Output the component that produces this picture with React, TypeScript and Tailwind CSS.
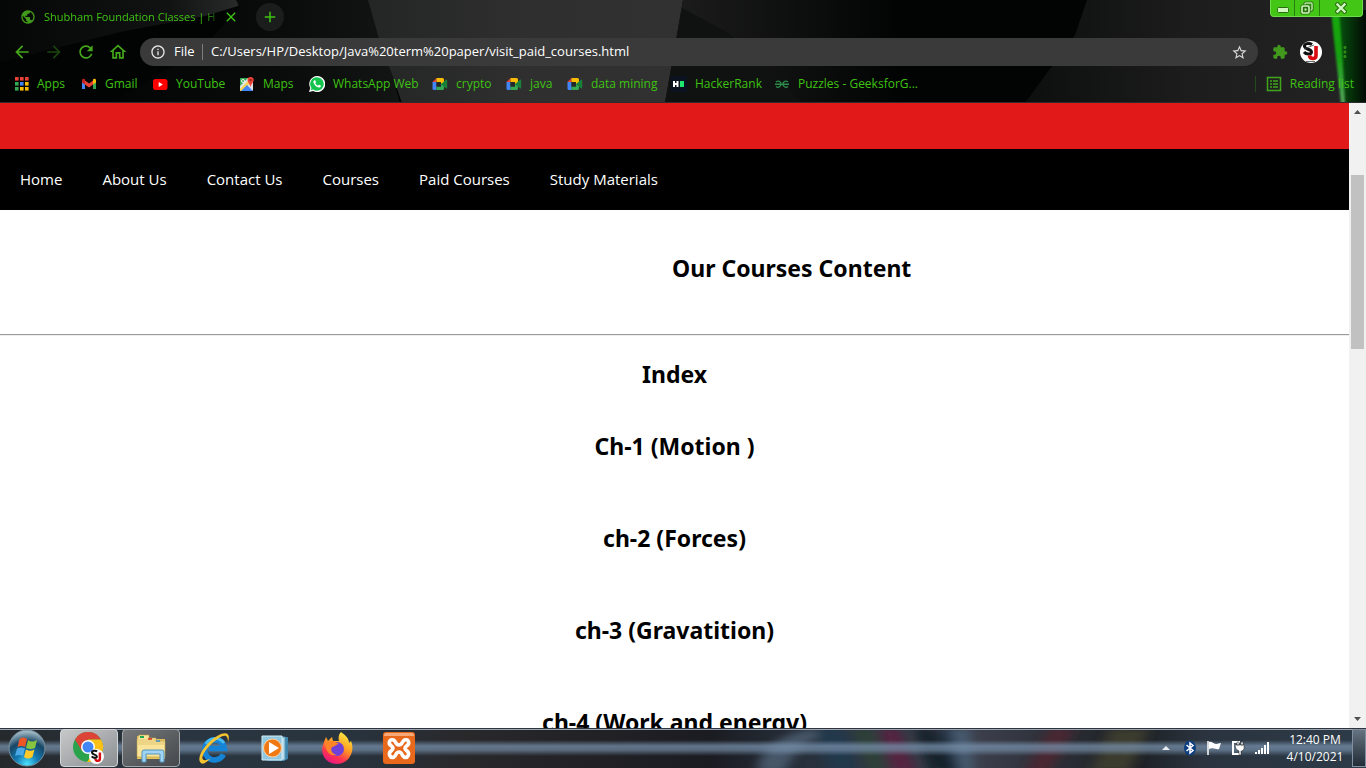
import React from "react";
import { MdArrowBack, MdArrowForward, MdRefresh, MdOutlineHome, MdInfoOutline, MdStarOutline, MdExtension, MdPublic, MdMoreVert, MdAdd, MdClose } from "react-icons/md";

const uiFont = "font-['Open_Sans','Noto_Sans',sans-serif]";

function Backdrop() {
  return (
    <svg className="absolute inset-0 -z-10 h-full w-full" viewBox="0 0 1366 103" preserveAspectRatio="none" aria-hidden="true">
      <defs>
        <linearGradient id="left" x1="0" x2="1"><stop offset="0" stopColor="#050707" /><stop offset="0.7" stopColor="#111212" /><stop offset="1" stopColor="#2a2b2b" /></linearGradient>
        <linearGradient id="dim" x1="0" x2="1"><stop offset="0" stopColor="#030404" /><stop offset="0.6" stopColor="#0a0c0b" /><stop offset="1" stopColor="#131515" /></linearGradient>
        <linearGradient id="mid" x1="0" x2="1"><stop offset="0" stopColor="#242525" /><stop offset="0.5" stopColor="#2f2f2f" /><stop offset="1" stopColor="#313131" /></linearGradient>
        <linearGradient id="fade" x1="0" x2="1"><stop offset="0" stopColor="#1d1d1d" /><stop offset="1" stopColor="#020303" /></linearGradient>
        <linearGradient id="right" x1="0" x2="1"><stop offset="0" stopColor="#0d0e0e" /><stop offset="0.5" stopColor="#1d1d1d" /><stop offset="1" stopColor="#232323" /></linearGradient>
        <linearGradient id="glow" x1="0" x2="1"><stop offset="0" stopColor="#0a6a10" /><stop offset="0.4" stopColor="#053d0b" /><stop offset="1" stopColor="#020a04" /></linearGradient>
        <linearGradient id="beam" x1="0" y1="0" x2="0" y2="1"><stop offset="0" stopColor="#16a80c" /><stop offset="0.5" stopColor="#17a012" /><stop offset="1" stopColor="#53a85a" /></linearGradient>
        <filter id="haze" x="-1" width="3"><feGaussianBlur stdDeviation="1 0" /></filter>
      </defs>
      <rect width="1366" height="103" fill="#020404" />
      <path d="M0 0H242L238 6 205 16 120 32 0 62Z" fill="url(#left)" />
      <path d="M236 0H370L400 103H110L200 50 240 8Z" fill="url(#dim)" />
      <path d="M368 0H683L665 103H402L378 35Z" fill="url(#mid)" />
      <path d="M683 0H900V103H665Z" fill="url(#fade)" />
      <path d="M682 8 730 34 802 103H665Z" fill="#101111" />
      <path d="M1087 0H1366V103H1025L1075 35Z" fill="url(#right)" />
      <path d="M1333 10H1366V103H1345Z" fill="url(#glow)" />
      <path d="M1331 10H1339L1342 50 1345 103H1341L1334 40Z" fill="url(#beam)" filter="url(#haze)" />
      <path d="M0 102.5H1366" stroke="#2c2c2c" />
    </svg>
  );
}

function SJ({ className }: { className?: string }) {
  return (
    <svg viewBox="0 0 22 22" className={className} aria-hidden="true">
      <circle cx="11" cy="11" r="11" fill="#fff" />
      <path d="M12 3.500C9 1.500 4 2.500 4.500 5.500S11.500 8 11.500 11 6 13.500 4 11" fill="none" stroke="#111" strokeWidth="3" />
      <path d="M16 5V14.500C16 18.500 10 18.500 9.500 14.500" fill="none" stroke="#d80c12" strokeWidth="3.600" />
      <path d="M4 8 14 4M6 20.500H15" stroke="#444" strokeWidth="0.800" />
    </svg>
  );
}

function AppsIcon() {
  const c = ["#ea4335", "#ea4335", "#ea4335", "#34a853", "#4285f4", "#fbbc04", "#34a853", "#fbbc04", "#fbbc04"];
  return (
    <svg viewBox="0 0 16 16" className="size-4" aria-hidden="true">
      {c.map((f, i) => <rect key={i} x={2 + (i % 3) * 5} y={1 + Math.floor(i / 3) * 5} width="3.600" height="3.600" fill={f} />)}
    </svg>
  );
}
function GmailIcon() {
  return (
    <svg viewBox="0 0 16 16" className="size-4" aria-hidden="true">
      <path d="M1 4V13H4V7Z" fill="#4285f4" /><path d="M15 4V13H12V7Z" fill="#34a853" />
      <path d="M4 4.500 8 7.500 12 4.500V8.500L8 11.500 4 8.500Z" fill="#ea4335" />
      <path d="M1 4.500C1 2.500 3 2.300 4 3.500V8.500L1 6.500Z" fill="#c5221f" /><path d="M15 4.500C15 2.500 13 2.300 12 3.500V8.500L15 6.500Z" fill="#fbbc04" />
    </svg>
  );
}
function YouTubeIcon() {
  return (
    <svg viewBox="0 0 16 16" className="size-4" aria-hidden="true">
      <rect x="1" y="3" width="14.500" height="11" rx="2.500" fill="#f00" /><path d="M6.700 6V11L10.800 8.500Z" fill="#fff" />
    </svg>
  );
}
function MapsIcon() {
  return (
    <svg viewBox="0 0 16 16" className="size-4" aria-hidden="true">
      <rect x="1" y="2" width="13" height="13" rx="1" fill="#dfe3e6" />
      <path d="M1 2H9L1 10Z" fill="#34a853" />
      <path d="M1 13 12 2 14 4 3 15H1Z" fill="#fbd34c" /><path d="M2 15 8 9 14 15Z" fill="#4285f4" />
      <circle cx="4" cy="5" r="1.500" fill="none" stroke="#fff" strokeWidth="0.900" />
      <path d="M11.500 11C11 8 8.500 6.500 8.500 4A3 3 0 0 1 14.700 4C14.700 6.500 12 8 11.500 11Z" fill="#ea4335" /><circle cx="11.600" cy="4" r="1.100" fill="#8b1a14" />
    </svg>
  );
}
function WhatsAppIcon() {
  return (
    <svg viewBox="0 0 16 16" className="size-4" aria-hidden="true">
      <path d="M8 0A8 8 0 0 0 1.300 12L0 16 4.200 14.900A8 8 0 1 0 8 0Z" fill="#fff" />
      <path d="M8 1.300A6.700 6.700 0 0 0 2.500 12L1.800 14.200 4.200 13.500A6.700 6.700 0 1 0 8 1.300Z" fill="#12c44e" />
      <path d="M5.300 4.200C4 5 4.200 6.500 5.500 8.500S9 11.800 10.500 11.500 12 9.700 11.800 9.500L10 8.700 9 9.800C7.800 9.200 6.900 8.400 6.300 7.200L7 6.200 6.200 4.200Z" fill="#fff" />
    </svg>
  );
}
function MeetIcon() {
  return (
    <svg viewBox="0 0 16 16" className="size-4" aria-hidden="true">
      <path d="M0.500 6 4.500 2V6Z" fill="#ea4335" /><path d="M4.500 2H10.500Q12 2 12 3.500V7L9 9V6H4.500Z" fill="#fbbc04" />
      <path d="M0.500 6H4.500V11H4.500V14H2Q0.500 14 0.500 12.500Z" fill="#4285f4" />
      <path d="M4.500 10.500H9V8L12 6V12.500Q12 14 10.500 14H4.500Z" fill="#34a853" />
      <rect x="4.500" y="6" width="4.500" height="4.500" fill="#262727" />
      <path d="M9 8.200 14 3.800Q15.200 3.200 15.200 4.500V11.800Q15.200 13 14 12.300Z" fill="#188038" />
    </svg>
  );
}
function HackerRankIcon() {
  return (
    <svg viewBox="0 0 16 16" className="size-4" aria-hidden="true">
      <rect width="16" height="16" fill="#0b1320" /><path d="M3 5V11M6.500 5V11M3 8H6.500" stroke="#fff" strokeWidth="2" /><rect x="9" y="5" width="4" height="6" fill="#1ee870" />
    </svg>
  );
}
function GeeksIcon() {
  return (
    <svg viewBox="0 0 16 16" className="size-4" aria-hidden="true">
      <path d="M2 6C4 4.500 7 5 7 8S4 12 2 10.500M14 6C12 4.500 9 5 9 8S12 12 14 10.500M1 8.300H15" fill="none" stroke="#2c8a4a" strokeWidth="1.400" />
    </svg>
  );
}

const bookmarks = [
  { label: "Apps", icon: <AppsIcon />, w: "w-[68px]" },
  { label: "Gmail", icon: <GmailIcon />, w: "w-[71px]" },
  { label: "YouTube", icon: <YouTubeIcon />, w: "w-[87px]" },
  { label: "Maps", icon: <MapsIcon />, w: "w-[70px]" },
  { label: "WhatsApp Web", icon: <WhatsAppIcon />, w: "w-[123px]" },
  { label: "crypto", icon: <MeetIcon />, w: "w-[74px]" },
  { label: "java", icon: <MeetIcon />, w: "w-[61px]" },
  { label: "data mining", icon: <MeetIcon />, w: "w-[104px]" },
  { label: "HackerRank", icon: <HackerRankIcon />, w: "w-[103px]" },
  { label: "Puzzles - GeeksforG...", icon: <GeeksIcon />, w: "w-[160px]" },
];

function Browser() {
  return (
    <header className={`relative isolate flex h-[103px] shrink-0 flex-col overflow-hidden text-xs text-[#3fc312] ${uiFont}`}>
      <Backdrop />
      <div className="flex h-[35px] items-start">
        <div className="flex h-[34px] w-60 items-center justify-between pr-px pl-5">
          <MdPublic className="size-4 shrink-0 text-[#419b1b]" />
          <span className="ml-2 flex-1 text-[11px] whitespace-nowrap [mask-image:linear-gradient(to_right,black_88%,transparent)]">Shubham Foundation Classes | H</span>
          <button aria-label="Close tab"><MdClose className="size-4" /></button>
        </div>
        <button aria-label="New tab" className="mt-[3px] ml-4 flex size-7 items-center justify-center rounded-full bg-[#1b1d1c]"><MdAdd className="size-[18px]" /></button>
        <div className="mr-[3px] ml-auto flex h-[17px] overflow-hidden rounded-b border border-t-0 border-[#70dc4c] bg-[#43c616] text-[#c9f5ba]">
          <button aria-label="Minimize" className="flex w-6 items-end justify-center border-r border-[#257f0a] pb-[3px]"><svg viewBox="0 0 12 6" className="h-1.5 w-3"><rect x="0.500" y="0.500" width="11" height="5" rx="1" fill="#d0f7bd" stroke="#286f12" /></svg></button>
          <button aria-label="Restore" className="flex w-[25px] items-center justify-center border-r border-[#257f0a]"><svg viewBox="0 0 14 14" className="size-3.5"><rect x="5" y="2" width="7" height="7" rx="1" fill="none" stroke="#286f12" strokeWidth="3.200" /><rect x="5" y="2" width="7" height="7" rx="1" fill="none" stroke="#b5e79e" strokeWidth="1.500" /><rect x="2" y="5" width="7" height="7" rx="1" fill="#43c616" stroke="#286f12" strokeWidth="3.200" /><rect x="2" y="5" width="7" height="7" rx="1" fill="#286f12" stroke="#d0f7bd" strokeWidth="1.600" /><rect x="4.500" y="7.500" width="2" height="2" fill="#d0f7bd" /></svg></button>
          <button aria-label="Close" className="flex w-[42px] items-center justify-center"><svg viewBox="0 0 12 12" className="size-3"><path d="M2.500 2.500 9.500 9.500M9.500 2.500 2.500 9.500" stroke="#286f12" strokeWidth="4.500" strokeLinecap="square" /><path d="M2.500 2.500 9.500 9.500M9.500 2.500 2.500 9.500" stroke="#d0f7bd" strokeWidth="2.400" strokeLinecap="square" /></svg></button>
        </div>
      </div>
      <div className="flex h-[34px] items-center pr-3 pl-3">
        <div className="flex w-32 shrink-0 gap-3 text-[#45a81b]">
          <button aria-label="Back"><MdArrowBack className="size-5" /></button>
          <button aria-label="Forward" className="text-[#1c4410]"><MdArrowForward className="size-5" /></button>
          <button aria-label="Reload"><MdRefresh className="size-5" /></button>
          <button aria-label="Home page"><MdOutlineHome className="size-5" /></button>
        </div>
        <div className="flex h-7 min-w-0 flex-1 items-center rounded-full bg-[#3a3a3a] px-2.5 text-[13px] text-white">
          <MdInfoOutline className="size-4 shrink-0 text-[#e5e5e5]" />
          <span className="ml-2 w-7">File</span>
          <span className="h-4 border-l border-[#7d7d7d]" />
          <input aria-label="Address" className="min-w-0 flex-1 bg-transparent pl-2 outline-none" defaultValue="C:/Users/HP/Desktop/Java%20term%20paper/visit_paid_courses.html" />
          <button aria-label="Bookmark this page"><MdStarOutline className="size-[17px] text-[#d8d8d8]" /></button>
        </div>
        <button aria-label="Extensions" className="ml-3.5 text-[#41981d]"><MdExtension className="size-4" /></button>
        <button aria-label="Profile" className="ml-3"><SJ className="size-[22px]" /></button>
        <button aria-label="Menu" className="ml-3.5 text-[#328b16]"><MdMoreVert className="size-[18px]" /></button>
      </div>
      <nav aria-label="Bookmarks" className="flex h-[30px] items-center pl-[13px]">
        {bookmarks.map((b) => (
          <a key={b.label} href="#" className={`flex shrink-0 items-center gap-2 whitespace-nowrap ${b.w}`}>{b.icon}{b.label}</a>
        ))}
        <button className="mr-3 ml-auto flex items-center gap-2 border-l border-[#244b1b] pl-2.5 whitespace-nowrap">
          <svg viewBox="0 0 16 16" className="size-4" fill="none" stroke="#41a51b" aria-hidden="true"><rect x="1.500" y="1.500" width="13" height="13" strokeWidth="1.500" /><path d="M4 5H6M7 5H12M4 8H6M7 8H12M4 11H6M7 11H12" strokeWidth="1.500" /></svg>
          Reading list
        </button>
      </nav>
    </header>
  );
}

const links = ["Home", "About Us", "Contact Us", "Courses", "Paid Courses", "Study Materials"];
const chapters = ["Ch-1 (Motion )", "ch-2 (Forces)", "ch-3 (Gravatition)", "ch-4 (Work and energy)"];

function Page() {
  return (
    <div className="flex min-h-0 flex-1 overflow-hidden bg-white">
      <main className="min-w-0 flex-1 font-['Noto_Sans','Open_Sans',sans-serif] text-black">
        <div className="h-[46px] bg-[#e11a19]" />
        <nav className="flex h-[61px] items-center gap-10 bg-black px-5 font-['Open_Sans',sans-serif] text-[15px] text-white">
          {links.map((l) => <a key={l} href="#" className="whitespace-nowrap">{l}</a>)}
        </nav>
        <div className="flex h-[124px] pt-10">
          <h2 className="ml-[672px] text-[23px] leading-9 font-bold whitespace-nowrap">Our Courses Content</h2>
        </div>
        <hr className="border-t border-b border-t-[#9a9a9a] border-b-[#eee]" />
        <h2 className="pt-5 text-center text-[23px] leading-9 font-bold">Index</h2>
        <div className="flex flex-col gap-14 pt-9 text-center text-[23px] leading-9 font-bold">
          {chapters.map((c) => <h2 key={c}>{c}</h2>)}
        </div>
      </main>
      <div className="flex w-[17px] shrink-0 flex-col items-center bg-[#f1f1f1]" aria-hidden="true">
        <svg viewBox="0 0 17 17" className="size-[17px]"><path d="M5 11 8.500 7 12 11Z" fill="#505050" /></svg>
        <div className="mt-[55px] h-[174px] w-[13px] bg-[#c1c1c1]" />
        <svg viewBox="0 0 17 17" className="mt-auto size-[17px]"><path d="M5 6 8.500 10 12 6Z" fill="#505050" /></svg>
      </div>
    </div>
  );
}

function TaskBackdrop() {
  return (
    <svg className="absolute inset-0 -z-10 h-full w-full" viewBox="0 0 1366 40" preserveAspectRatio="none" aria-hidden="true">
      <defs>
        <linearGradient id="tb" x1="0" x2="1"><stop offset="0" stopColor="#26292c" /><stop offset="0.13" stopColor="#293540" /><stop offset="0.26" stopColor="#28333d" /><stop offset="0.34" stopColor="#29282b" /><stop offset="0.52" stopColor="#1b1c22" /><stop offset="0.6" stopColor="#29333f" /><stop offset="0.72" stopColor="#3b3e4a" /><stop offset="0.83" stopColor="#1d2024" /><stop offset="0.88" stopColor="#2a333e" /><stop offset="1" stopColor="#2d3b49" /></linearGradient>
        <linearGradient id="shine" x1="0" y1="0" x2="0" y2="1"><stop offset="0.3" stopColor="#7891ac" stopOpacity="0" /><stop offset="0.45" stopColor="#7891ac" stopOpacity="0.750" /><stop offset="0.55" stopColor="#7891ac" stopOpacity="0.650" /><stop offset="0.7" stopColor="#7891ac" stopOpacity="0" /></linearGradient>
        <filter id="soft"><feGaussianBlur stdDeviation="6 3" /></filter>
      </defs>
      <rect width="1366" height="40" fill="url(#tb)" />
      <g filter="url(#soft)">
        <path d="M758 44C758 20 780 6 820 0H850C810 8 795 20 785 44Z" fill="#465769" />
        <path d="M815 0H845L860 44H830Z" fill="#24384c" /><path d="M852 0H872L888 44H868Z" fill="#2f4139" />
        <path d="M880 0H898L916 44H892Z" fill="#572440" /><path d="M915 0H935L955 44H930Z" fill="#14202c" />
        <path d="M940 0H965V44H955Z" fill="#1a2f42" /><path d="M950 0H970L975 44H960Z" fill="#465a6e" />
        <path d="M1050 0H1075L1050 44H1025Z" fill="#4a2630" /><path d="M1110 0H1150L1130 44H1090Z" fill="#3a3a2e" />
      </g>
      <rect width="1366" height="40" fill="url(#shine)" />
      <path d="M0 .5H1366" stroke="#30343d" /><path d="M0 1.500H1366" stroke="#9ba5b3" />
    </svg>
  );
}

function Taskbar() {
  return (
    <footer className={`relative isolate flex h-10 shrink-0 items-center overflow-hidden text-xs text-white ${uiFont}`}>
      <TaskBackdrop />
      <button aria-label="Start" className="ml-2">
        <svg viewBox="0 0 38 38" className="size-[38px]"><defs><radialGradient id="orb" cx="0.5" cy="0.95" r="0.9"><stop offset="0" stopColor="#4be4ff" /><stop offset="0.35" stopColor="#147bb4" /><stop offset="0.7" stopColor="#174665" /><stop offset="1" stopColor="#9fb7c4" /></radialGradient></defs><circle cx="19" cy="19" r="18" fill="url(#orb)" stroke="#75909f" /><path d="M11.500 10Q15 7 19 10L17 18Q13 16 9.500 18Z" fill="#ee5625" /><path d="M20 11Q24 14 29 11L27 19Q23 21 18 19Z" fill="#87c440" /><path d="M9 19.500Q13 17.500 17 19.500L15 27Q11 25 7 27Z" fill="#4aa8e5" /><path d="M18 20.500Q22 23 26.500 20.500L24.500 28Q20 31 16 28Z" fill="#ffc928" /></svg>
      </button>
      <button aria-label="Google Chrome" className="ml-3.5 flex h-[38px] w-[58px] items-center justify-center rounded-sm border border-[#d2d5d8] bg-linear-to-br from-[#c7c8c9] to-[#8c9093]">
        <svg viewBox="0 0 32 32" className="size-8"><circle cx="15" cy="15" r="15" fill="#2ba24c" /><path d="M2 7.500A15 15 0 0 1 28 7.500H15L9 19Z" fill="#dc4437" /><path d="M28 7.500A15 15 0 0 1 14 30L22 18 15 7.500Z" fill="#fbc116" /><circle cx="15" cy="15" r="7" fill="#fff" /><circle cx="15" cy="15" r="5.500" fill="#4285f4" /><g transform="translate(16 17) scale(.68)"><circle cx="11" cy="11" r="11" fill="#fff" /><path d="M12 3.500C9 1.500 4 2.500 4.500 5.500S11.500 8 11.500 11 6 13.500 4 11" fill="none" stroke="#111" strokeWidth="3" /><path d="M16 5V14.500C16 18.500 10 18.500 9.500 14.500" fill="none" stroke="#d80c12" strokeWidth="3.600" /></g></svg>
      </button>
      <button aria-label="File Explorer" className="ml-1 flex h-[38px] w-[58px] items-center justify-center rounded-sm border border-[#a4a7aa] bg-linear-to-br from-[#77797b] to-[#44484c]">
        <svg viewBox="0 0 34 32" className="h-8 w-[34px]"><path d="M3 4H14V7H31V27H3Z" fill="#e6c55b" /><path d="M5 3H15V6H22V9H31V25H3V8Z" fill="#f9e49a" stroke="#b99c45" strokeWidth="0.600" /><path d="M6 4H10V6H6Z" fill="#22a552" /><path d="M14 6H18V8H14Z" fill="#df4631" /><path d="M22 8H26V10H22Z" fill="#3594d6" /><path d="M4 8H30M4 10H30M4 12H30" stroke="#cfb15a" strokeWidth="0.600" /><path d="M8 30V20Q8 18 10 18H28Q30 18 30 20V30H26V22H12V30Z" fill="#9fd4f2" stroke="#5494be" /></svg>
      </button>
      <button aria-label="Internet Explorer" className="ml-[17px]">
        <svg viewBox="0 0 34 34" className="size-[34px]"><path d="M26.500 23.500A10 10 0 1 1 27.500 17.500H12" fill="none" stroke="#1583d6" strokeWidth="5.500" /><path d="M9 13C12 7 22 5 27 12" fill="none" stroke="#44b9f2" strokeWidth="3" /><path d="M4 32C-2 27 9 11 21 4.500 29 0 34 2 31 11 31 4 28 3 22 7 11 14 3 26 6 28.500 8 30 11 29 14 27 10 31 6 34 4 32Z" fill="#f6c431" /></svg>
      </button>
      <button aria-label="Windows Media Player" className="ml-[30px]">
        <svg viewBox="0 0 28 28" className="size-7"><path d="M8 3H27V25L22 27H8Z" fill="#3c84ac" /><path d="M5 3H24V26H5Z" fill="#b6d9e8" stroke="#5797b9" /><path d="M1 2H21V26H1Z" fill="#92c8df" stroke="#d5edf6" /><circle cx="11.500" cy="14" r="9" fill="#f17913" stroke="#ffd1a3" /><path d="M8 8 18 14 8 20Z" fill="#fff" /></svg>
      </button>
      <button aria-label="Firefox" className="ml-8">
        <svg viewBox="0 0 32 32" className="size-8"><defs><linearGradient id="ff" x1="0.8" y1="0" x2="0.3" y2="1"><stop offset="0" stopColor="#fff244" /><stop offset="0.45" stopColor="#ff9a22" /><stop offset="0.75" stopColor="#ff344f" /><stop offset="1" stopColor="#e31587" /></linearGradient></defs><path d="M20 0C24 3 28 6 28 11L30 9C35 21 26 32 16 32 4 32-2 21 3 10L5 5 7 9 11 5 12 9 18 9C17 5 18 2 20 0Z" fill="url(#ff)" /><circle cx="16" cy="17" r="7" fill="#7041d8" /><path d="M4 10C10 8 14 9 18 12 15 12 14 15 11 15 9 18 11 22 16 23 8 25 4 18 4 10Z" fill="#ff8427" /></svg>
      </button>
      <button aria-label="XAMPP" className="ml-[30px]">
        <svg viewBox="0 0 32 32" className="size-8"><rect width="32" height="32" rx="3" fill="#e8691b" /><path d="M1 3Q1 1 3 1H29Q31 1 31 3V4H1Z" fill="#f6a878" /><path d="M10.500 8C6.500 6.500 4.500 11.500 8.500 14 10.500 15.500 10.500 17 8.500 18.500 4.500 21.500 7 26.500 11 25 13.500 24 12.500 20 16 20S18.500 24 21 25C25 26.500 27.500 21.500 23.500 18.500 21.500 17 21.500 15.500 23.500 14 27.500 11.500 25.500 6.500 21.500 8 19 9 19.500 13 16 13S13 9 10.500 8Z" fill="none" stroke="#fff" strokeWidth="3.600" strokeLinejoin="round" /></svg>
      </button>
      <div className="ml-auto flex items-center gap-2">
        <svg viewBox="0 0 16 16" className="size-4"><path d="M4 10 8 6 12 10Z" fill="#e8edf2" /></svg>
        <svg viewBox="0 0 16 16" className="size-4"><ellipse cx="8" cy="8" rx="6" ry="7.500" fill="#0c3f80" /><path d="M4.500 5 11 10.500 8 13V3L11 5.500 4.500 11" fill="none" stroke="#fff" strokeWidth="1.500" /></svg>
        <svg viewBox="0 0 16 16" className="size-4"><path d="M2 1V15" stroke="#fff" strokeWidth="1.500" /><path d="M3 2C6 1 7 4 10 4 12 4 13 3 15 3L13 9C10 10 8 7 3 9Z" fill="#fff" /></svg>
        <svg viewBox="0 0 16 16" className="size-4"><path d="M10 2H3V14H9" fill="none" stroke="#fff" strokeWidth="2" /><path d="M5 5H14V9L12 11H11V15H9V11L6 9ZM7 2H9V5H7ZM11 2H13V5H11Z" fill="#fff" stroke="#222" strokeWidth="0.500" /></svg>
        <svg viewBox="0 0 16 16" className="size-4"><path d="M1 12H3V14H1ZM4 10H6V14H4ZM7 8H9V14H7ZM10 5H12V14H10ZM13 2H15V14H13Z" fill="#fff" /></svg>
        <div className="w-[74px] text-center leading-[17px]"><div>12:40 PM</div><div>4/10/2021</div></div>
      </div>
      <button aria-label="Show desktop" className="h-[38px] w-3.5 shrink-0 border border-[#8190a0] bg-linear-to-b from-[#667481] to-[#222d38]" />
    </footer>
  );
}

export default function App() {
  return <div className="flex h-screen flex-col overflow-hidden"><Browser /><Page /><Taskbar /></div>;
}
